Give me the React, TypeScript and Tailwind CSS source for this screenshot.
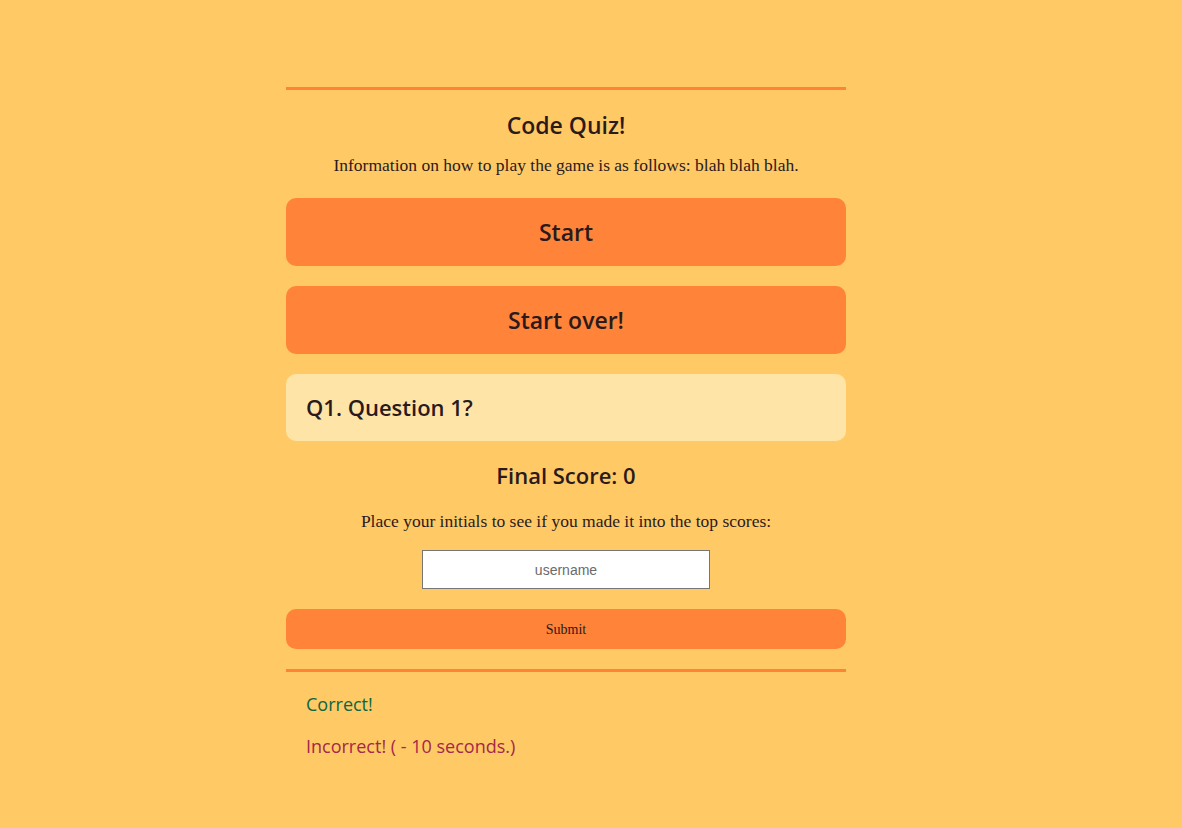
export default function App() {
  return (
    <div className="min-h-[828px] w-full bg-[#ffc966] pt-[87px] text-[#2b1a1c]">
      <div className="ml-[286px] w-[560px] font-['Open_Sans',sans-serif]">
        <div className="border-t-[3px] border-[#ff8338]" />
        <h1 className="mt-[18px] text-center text-[23px] font-semibold leading-[34px]">Code Quiz!</h1>
        <p className="mt-[12px] text-center font-['Liberation_Serif',serif] text-[17.5px] leading-[22px]">
          Information on how to play the game is as follows: blah blah blah.
        </p>
        <button className="mt-[22px] flex h-[68px] w-full items-center justify-center rounded-[10px] bg-[#ff8338] text-[23px] font-semibold">
          Start
        </button>
        <button className="mt-[20px] flex h-[68px] w-full items-center justify-center rounded-[10px] bg-[#ff8338] text-[23px] font-semibold">
          Start over!
        </button>
        <div className="mt-[20px] flex h-[67px] items-center rounded-[10px] bg-[#ffe4a8] px-[20px] text-[22px] font-semibold">
          Q1. Question 1?
        </div>
        <h2 className="mt-[18px] text-center text-[22px] font-semibold leading-[32px]">Final Score: 0</h2>
        <p className="mt-[19px] text-center font-['Liberation_Serif',serif] text-[17.5px] leading-[22px]">
          Place your initials to see if you made it into the top scores:
        </p>
        <div className="mt-[18px] flex justify-center">
          <input
            placeholder="username"
            className="h-[39px] w-[288px] border border-[#767676] bg-white text-center font-['Liberation_Sans',sans-serif] text-[14px] placeholder:text-[#6b6b6b]"
          />
        </div>
        <button className="mt-[20px] flex h-[40px] w-full items-center justify-center rounded-[10px] bg-[#ff8338] font-['Liberation_Serif',serif] text-[14px]">
          Submit
        </button>
        <div className="mt-[20px] border-t-[3px] border-[#ff8338]" />
        <div className="px-[20px] pt-[20px] text-[18px] font-medium">
          <p className="leading-[24px] text-[#0b6640]">Correct!</p>
          <p className="mt-[18px] leading-[24px] text-[#a3284a]">Incorrect! ( - 10 seconds.)</p>
        </div>
      </div>
    </div>
  )
}
